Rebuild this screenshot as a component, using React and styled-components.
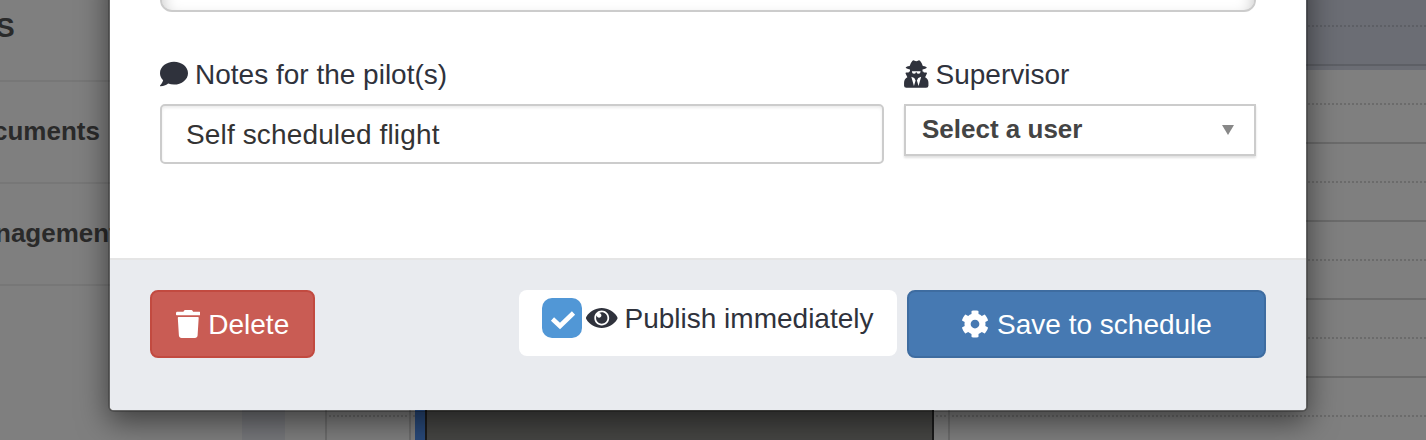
import React from 'react';
import styled, { createGlobalStyle } from 'styled-components';
import { FaComment } from 'react-icons/fa';

const GlobalStyle = createGlobalStyle`
  * { box-sizing: border-box; }
  body {
    margin: 0;
    overflow: hidden;
    font-family: "Liberation Sans", Arial, sans-serif;
    font-size: 28px;
    color: #2f323c;
  }
`;

const Screen = styled.div`
  position: relative;
  width: 1426px;
  height: 440px;
  overflow: hidden;
  background: #7f7f7f;
`;

const Page = styled.div`
  display: grid;
  grid-template-columns: 242px 43px 1fr;
  height: 440px;
`;

const Sidebar = styled.div`
  display: flex;
  flex-direction: column;
  overflow: hidden;
`;

const SidebarItem = styled.div`
  flex: none;
  display: flex;
  align-items: center;
  height: ${(p) => p.$height}px;
  padding-bottom: ${(p) => p.$lift || 0}px;
  border-bottom: 2px solid #777;
  color: #2a2a2a;
  font-size: ${(p) => p.$size || 26}px;
  font-weight: bold;
  white-space: nowrap;

  span {
    margin-left: ${(p) => p.$shift}px;
  }
`;

const Gutter = styled.div`
  background: #76777b;
`;

const Calendar = styled.div`
  display: grid;
  grid-template-columns: 40px 84px 539px 1fr;
  min-width: 0;
`;

const Lane = styled.div`
  display: flex;
  flex-direction: column;
  overflow: hidden;
  border-left: ${(p) => (p.$line ? '2px solid #6d6d6d' : 'none')};
`;

const Slot = styled.div`
  flex: none;
  display: flex;
  align-items: flex-end;
  padding-left: 2px;
  height: ${(p) => p.$height}px;
  background: ${(p) => (p.$tinted ? '#6b6d74' : 'transparent')};
  border-bottom: ${(p) => (p.$solid ? '2px solid #6b6b6b' : 'none')};
  border-color: ${(p) => (p.$tinted ? '#5d5f65' : '#6b6b6b')};

  &::after {
    content: '';
    flex: 1;
    height: ${(p) => (p.$dotted ? 2 : 0)}px;
    background: repeating-linear-gradient(
      90deg,
      ${(p) => (p.$tinted ? '#5d5f65' : '#6b6b6b')} 0 2px,
      transparent 2px 4px
    );
  }
`;

const TintEdge = styled.div`
  flex: none;
  height: 4px;
  background: #6b6d74;
`;

const EventLane = styled.div`
  display: grid;
  grid-template-columns: 4px 10px 509px 1fr;
  border-left: 2px solid #6d6d6d;
`;

const EventStripe = styled.div`
  background: #28497a;
`;

const EventBlock = styled.div`
  background: #464644;
  border: solid #1b1b1b;
  border-width: 0 2px;
`;

const Modal = styled.div`
  position: absolute;
  left: 108px;
  top: -40px;
  width: 1200px;
  height: 452px;
  display: flex;
  flex-direction: column;
  border: 2px solid rgba(0, 0, 0, 0.2);
  border-radius: 6px;
  background: #fff;
  background-clip: padding-box;
  box-shadow: 0 10px 30px rgba(0, 0, 0, 0.5);
`;

const ModalBody = styled.div`
  height: 296px;
  padding: 0 50px;
`;

const UpperField = styled.div`
  height: 50px;
  border: 2px solid #ccc;
  border-radius: 12px;
  background: #fff;
  box-shadow: inset 0 9px 16px rgba(0, 0, 0, 0.25);
`;

const FieldRow = styled.div`
  display: grid;
  grid-template-columns: 724px 352px;
  column-gap: 20px;
  margin-top: 42px;
`;

const Label = styled.div`
  display: flex;
  align-items: center;
  gap: ${(p) => p.$gap || 7}px;
  height: 40px;
  margin-bottom: 10px;
  white-space: nowrap;

  svg { flex: none; }
`;

const Caption = styled.span`
  padding-top: 2px;
  letter-spacing: ${(p) => p.$spacing || 0}px;
`;

const TextField = styled.div`
  display: flex;
  align-items: center;
  height: 60px;
  padding-left: 24px;
  border: 2px solid #ccc;
  border-radius: 5px;
  box-shadow: inset 0 2px 3px rgba(0, 0, 0, 0.08);
  color: #333;
`;

const Select = styled.div`
  display: flex;
  align-items: center;
  justify-content: space-between;
  height: 52px;
  padding: 0 20px 2px 16px;
  border: 2px solid #ccc;
  box-shadow: 0 2px 2px rgba(0, 0, 0, 0.12);
  color: #444;
  font-size: 26px;
  font-weight: bold;
`;

const Arrow = styled.svg`
  width: 12px;
  height: 10px;
  margin-top: 2px;
  fill: #888;
`;

const ModalFooter = styled.div`
  flex: 1;
  display: flex;
  align-items: flex-start;
  padding: 30px 40px 0;
  border-top: 2px solid #e5e5e5;
  border-radius: 0 0 4px 4px;
  background: #e9ebef;
`;

const Button = styled.div`
  display: flex;
  align-items: center;
  justify-content: center;
  gap: 8px;
  width: ${(p) => p.$width}px;
  height: 68px;
  border: 2px solid ${(p) => p.$edge};
  border-radius: 8px;
  background: ${(p) => p.$fill};
  color: #fff;
  white-space: nowrap;
`;

const PublishToggle = styled.div`
  display: flex;
  align-items: flex-start;
  width: 378px;
  height: 66px;
  margin: 0 10px 0 auto;
  padding: 8px 0 0 23px;
  border-radius: 8px;
  background: #fff;
`;

const Checkbox = styled.div`
  display: flex;
  align-items: center;
  justify-content: center;
  width: 40px;
  height: 40px;
  margin-right: 4px;
  padding: 3px 0 0 2px;
  border-radius: 10px;
  background: #5197d6;
`;

const ToggleLabel = styled.div`
  display: flex;
  align-items: center;
  gap: 7px;
  height: 40px;
  white-space: nowrap;
`;

const Glyph = styled.svg`
  flex: none;
  width: ${(p) => p.$width}px;
  height: 28px;
  margin-top: ${(p) => p.$top || 0}px;
  fill: currentColor;
`;

const AgentIcon = () => (
  <Glyph $width={24.5} $top={-1} viewBox="0 0 74 85">
    <path
      fillRule="evenodd"
      d="M25 3q3-4 7-1 5 3 10 0 4-3 7 1 6 7 8 15 12 2 12 5 0 3-13 6v6h1q3 0 3 3h7q4 0 2 4l-5 10q10 5 10 17v9q0 6-7 6H7q-7 0-7-6v-9q0-12 10-17L5 42q-2-4 2-4h7q0-3 3-3h1v-6Q5 26 5 23q0-3 12-5 2-8 8-15zM24 36q0 6 6 6 5 0 6-5h2q1 5 6 5 6 0 6-6v-2H24zM22 51l8 28 5-17-4-7zM52 51l-8 28-5-17 4-7z"
    />
  </Glyph>
);

const TrashIcon = () => (
  <Glyph $width={24.5} $top={-1} viewBox="0 0 448 512">
    <path d="M0 84V56c0-13.300 10.700-24 24-24h112l9.400-18.700c4-8.200 12.300-13.300 21.400-13.300h114.300c9.100 0 17.400 5.100 21.500 13.300L312 32h112c13.300 0 24 10.700 24 24v28c0 6.600-5.400 12-12 12H12C5.400 96 0 90.600 0 84zm415.200 56.700L394.800 467c-1.600 25.300-22.600 45-47.900 45H101.100c-25.300 0-46.300-19.700-47.900-45L32.800 140.700c-.4-6.900 5.100-12.700 12-12.700h358.500c6.800 0 12.300 5.800 11.900 12.700z" />
  </Glyph>
);

const EyeIcon = () => (
  <Glyph $width={31.5} viewBox="0 0 576 512">
    <path d="M569.354 231.631C512.969 135.949 407.810 72 288 72 168.140 72 63.004 135.994 6.646 231.631a47.999 47.999 0 0 0 0 48.739C63.031 376.051 168.190 440 288 440c119.860 0 224.996-63.994 281.354-159.631a47.997 47.997 0 0 0 0-48.738zM288 392c-75.162 0-136-60.827-136-136 0-75.162 60.826-136 136-136 75.162 0 136 60.826 136 136 0 75.162-60.826 136-136 136zm104-136c0 57.438-46.562 104-104 104s-104-46.562-104-104c0-17.708 4.431-34.379 12.236-48.973l-.001.032c0 23.651 19.173 42.823 42.824 42.823s42.824-19.173 42.824-42.823c0-23.651-19.173-42.824-42.824-42.824l-.032.001C253.621 156.431 270.292 152 288 152c57.438 0 104 46.562 104 104z" />
  </Glyph>
);

const CogIcon = () => (
  <Glyph $width={28} $top={-1} viewBox="0 0 512 512">
    <path d="M444.788 291.100l42.616 24.599c4.867 2.809 7.126 8.618 5.459 13.985-11.070 35.642-29.970 67.842-54.689 94.586a12.016 12.016 0 0 1-14.832 2.254l-42.584-24.595a191.577 191.577 0 0 1-60.759 35.130v49.182a12.010 12.010 0 0 1-9.377 11.718c-34.956 7.850-72.499 8.256-109.219.007-5.490-1.233-9.403-6.096-9.403-11.723v-49.184a191.555 191.555 0 0 1-60.759-35.130l-42.584 24.595a12.016 12.016 0 0 1-14.832-2.254c-24.718-26.744-43.619-58.944-54.689-94.586-1.667-5.366.592-11.175 5.459-13.985L67.212 291.100a193.480 193.480 0 0 1 0-70.199l-42.616-24.599c-4.867-2.809-7.126-8.618-5.459-13.985 11.070-35.642 29.970-67.842 54.689-94.586a12.016 12.016 0 0 1 14.832-2.254l42.584 24.595a191.577 191.577 0 0 1 60.759-35.130V25.759a12.010 12.010 0 0 1 9.377-11.718c34.956-7.850 72.499-8.256 109.219-.007 5.490 1.233 9.403 6.096 9.403 11.723v49.184a191.555 191.555 0 0 1 60.759 35.130l42.584-24.595a12.016 12.016 0 0 1 14.832 2.254c24.718 26.744 43.619 58.944 54.689 94.586 1.667 5.366-.592 11.175-5.459 13.985L444.788 220.900a193.485 193.485 0 0 1 0 70.200zM336 256c0-44.112-35.888-80-80-80s-80 35.888-80 80 35.888 80 80 80 80-35.888 80-80z" />
  </Glyph>
);

const SLOTS = [142, 220, 298, 376];

function HourSlots({ tinted }) {
  return (
    <>
      <Slot $height={27} $dotted $tinted={tinted} />
      <Slot $height={39} $solid $tinted={tinted} />
      {tinted && <TintEdge />}
      <Slot $height={tinted ? 35 : 39} $dotted />
      {SLOTS.map((y) => (
        <React.Fragment key={y}>
          <Slot $height={39} $solid />
          <Slot $height={39} $dotted />
        </React.Fragment>
      ))}
    </>
  );
}

export default function App() {
  return (
    <Screen>
      <GlobalStyle />
      <Page>
        <Sidebar>
          <SidebarItem $height={82} $lift={24} $size={28} $shift={-4}><span>S</span></SidebarItem>
          <SidebarItem $height={102} $lift={2} $shift={-7}><span>cuments</span></SidebarItem>
          <SidebarItem $height={102} $lift={2} $shift={-5}><span>nagement</span></SidebarItem>
        </Sidebar>
        <Gutter />
        <Calendar>
          <Lane />
          <Lane $line><HourSlots /></Lane>
          <EventLane>
            <Lane><HourSlots /></Lane>
            <EventStripe />
            <EventBlock />
            <Lane><HourSlots /></Lane>
          </EventLane>
          <Lane $line><HourSlots tinted /></Lane>
        </Calendar>
      </Page>

      <Modal>
        <ModalBody>
          <UpperField />
          <FieldRow>
            <div>
              <Label><FaComment /><Caption>Notes for the pilot(s)</Caption></Label>
              <TextField><Caption $spacing={0.14}>Self scheduled flight</Caption></TextField>
            </div>
            <div>
              <Label><AgentIcon /><Caption>Supervisor</Caption></Label>
              <Select>
                <span>Select a user</span>
                <Arrow viewBox="0 0 12 10"><path d="M0 0h12L6 10z" /></Arrow>
              </Select>
            </div>
          </FieldRow>
        </ModalBody>
        <ModalFooter>
          <Button $width={165} $fill="#c95c54" $edge="#c24a40">
            <TrashIcon /><Caption>Delete</Caption>
          </Button>
          <PublishToggle>
            <Checkbox>
              <svg width="26" height="20" viewBox="0 0 26 20" fill="none" stroke="#fff" strokeWidth="4.6">
                <path d="M2.500 9l7.500 7L23.500 3" />
              </svg>
            </Checkbox>
            <ToggleLabel>
              <EyeIcon /><Caption>Publish immediately</Caption>
            </ToggleLabel>
          </PublishToggle>
          <Button $width={359} $fill="#4679b2" $edge="#3e6ca0">
            <CogIcon /><Caption>Save to schedule</Caption>
          </Button>
        </ModalFooter>
      </Modal>
    </Screen>
  );
}
